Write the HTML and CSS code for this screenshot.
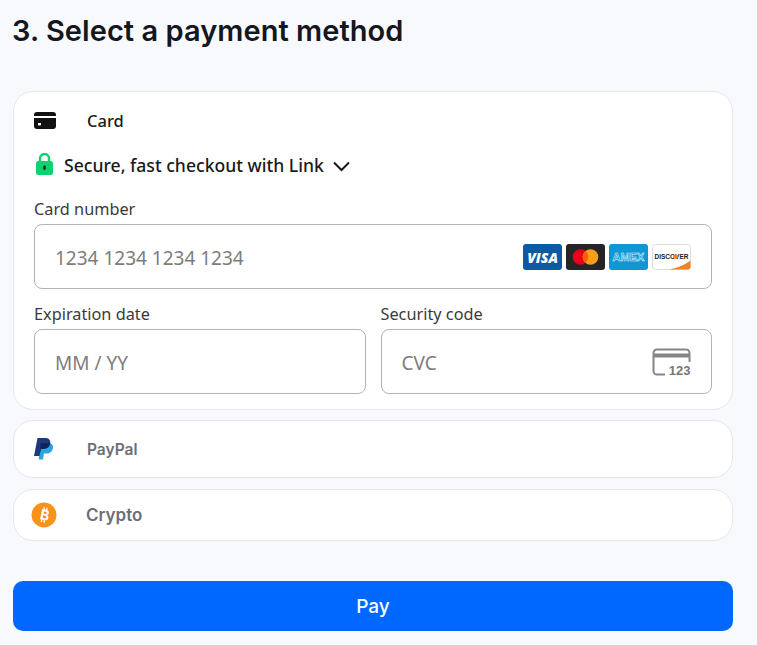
FILE: index.html
```html
<!DOCTYPE html>
<html lang="en">
<head>
    <meta charset="UTF-8" />
    <meta name="viewport" content="width=device-width, initial-scale=1.0" />
    <title>Checkout</title>
    <link rel="stylesheet" href="styles.css">
</head>
<body>
    <h2 class="title">3. Select a payment method</h2>

    <!-- CARD -->
    <div class="method method-open">
        <div class="method-head">
            <span class="method-icon">
                <svg width="22" height="17" viewBox="0 0 22 17">
                    <path d="M3 0h16a3 3 0 0 1 3 3v1H0V3a3 3 0 0 1 3-3z" fill="#111"/>
                    <path d="M0 6h22v8a3 3 0 0 1-3 3H3a3 3 0 0 1-3-3z" fill="#111"/>
                    <rect x="4" y="11" width="3" height="2.4" fill="#fff"/>
                </svg>
            </span>
            <span class="method-name method-name-card">Card</span>
        </div>
        <div class="link-row">
            <svg class="lock" width="17" height="22" viewBox="0 0 17 22">
                <path d="M4 9V5.500a4.500 4.500 0 0 1 9 0V9" fill="none" stroke="#10d16e" stroke-width="2.4"/>
                <rect x="0" y="8" width="17" height="14" rx="2.5" fill="#10d16e"/>
                <rect x="7.2" y="12.500" width="2.6" height="4.600" rx="1.300" fill="#0b3d24"/>
            </svg>
            <span class="link-text">Secure, fast checkout with Link</span>
            <svg class="chev" width="17" height="11" viewBox="0 0 17 11">
                <path d="M1 1.500l7.500 7.500 7.500-7.500" fill="none" stroke="#1a1a1a" stroke-width="2"/>
            </svg>
        </div>

        <label class="field-label">Card number</label>
        <div class="input">
            <span class="placeholder">1234 1234 1234 1234</span>
            <div class="brands">
                <svg width="39" height="26" viewBox="0 0 39 26">
                    <rect width="39" height="26" rx="3" fill="#0b5aa3"/>
                    <text x="19.500" y="18.500" text-anchor="middle" class="logo-visa">VISA</text>
                </svg>
                <svg width="39" height="26" viewBox="0 0 39 26">
                    <rect width="39" height="26" rx="3" fill="#252525"/>
                    <circle cx="14.500" cy="13" r="7.800" fill="#eb001b"/>
                    <circle cx="24.500" cy="13" r="7.800" fill="#f79e1b"/>
                    <path d="M19.500 7a7.800 7.800 0 0 1 0 12 7.800 7.800 0 0 1 0-12z" fill="#ff5f00"/>
                </svg>
                <svg width="39" height="26" viewBox="0 0 39 26">
                    <rect width="39" height="26" rx="3" fill="#0f97d4"/>
                    <text x="19.500" y="17" text-anchor="middle" class="logo-amex">AMEX</text>
                </svg>
                <svg width="39" height="26" viewBox="0 0 39 26">
                    <rect x="0.5" y="0.5" width="38" height="25" rx="3" fill="#fff" stroke="#dcdcdc"/>
                    <path d="M17 25.500c9-1.500 16-5 21.500-9V22.500a3 3 0 0 1-3 3z" fill="#f48120"/>
                    <text x="19.500" y="15" text-anchor="middle" class="logo-discover">DISCOVER</text>
                    <circle cx="23.700" cy="12.700" r="2.300" fill="#f48120"/>
                </svg>
            </div>
        </div>

        <div class="field-row">
            <div class="field">
                <label class="field-label">Expiration date</label>
                <div class="input">
                    <span class="placeholder">MM / YY</span>
                </div>
            </div>
            <div class="field">
                <label class="field-label">Security code</label>
                <div class="input">
                    <span class="placeholder">CVC</span>
                    <svg class="cvc" width="40" height="29" viewBox="0 0 40 29">
                        <path d="M13 26.500H5A3.500 3.500 0 0 1 1.500 23V5A3.500 3.500 0 0 1 5 1.500h29A3.500 3.500 0 0 1 37.500 5v9" fill="none" stroke="#868686" stroke-width="2"/>
                        <rect x="1" y="5.500" width="37" height="4" fill="#868686"/>
                        <text x="38.500" y="27" text-anchor="end" class="cvc-digits">123</text>
                    </svg>
                </div>
            </div>
        </div>
    </div>

    <!-- PAYPAL -->
    <div class="method method-paypal">
        <span class="method-icon">
            <svg width="20" height="22" viewBox="0 0 20 22">
                <path d="M6.500 5H14c3.500 0 5.500 1.800 5 5-.6 3.500-3 5.500-6.500 5.500H10L9 21.500H4.700z" fill="#2aa7e0"/>
                <path d="M3.500 0H11c3.800 0 5.800 2 5.200 5.300-.6 3.600-3.200 5.700-7 5.700H6.800L5.500 18H0z" fill="#1b3a7d"/>
                <path d="M6.500 5.200h9.700c-.1 .1 0 0 0 .1-.6 3.600-3.200 5.700-7 5.700H6.800L5.800 16.500z" fill="#12235a"/>
            </svg>
        </span>
        <span class="method-name method-name-off">PayPal</span>
    </div>

    <!-- CRYPTO -->
    <div class="method method-crypto">
        <span class="method-icon">
            <svg width="26" height="26" viewBox="0 0 26 26">
                <circle cx="13" cy="13" r="12.500" fill="#f7931a"/>
                <path d="M10 7.500h4.200c2 0 3.200 1 3.200 2.600 0 1.100-.6 2-1.600 2.300 1.300 .3 2.100 1.300 2.100 2.600 0 1.900-1.400 3-3.500 3H10zm2.300 2v2.200h1.500c.9 0 1.400-.4 1.400-1.100s-.5-1.100-1.400-1.100zm0 4v2.500h1.900c1 0 1.600-.5 1.600-1.250s-.6-1.250-1.600-1.250z" fill="#fff" transform="rotate(12 13 13)"/>
                <path d="M11.800 5.500v2.500M14.500 5.500v2.500M11.800 18v2.500M14.500 18v2.500" stroke="#fff" stroke-width="1.300" transform="rotate(12 13 13)"/>
            </svg>
        </span>
        <span class="method-name method-name-off">Crypto</span>
    </div>

    <button class="pay">Pay</button>
</body>
</html>
```

FILE: styles.css
```css
body {
    font-family: 'Noto Sans', sans-serif;
    background-color: #F8F9FC;
    margin: 0;
    padding: 0 24px 14px 13px;
    color: #1a1a1a;
}
.title {
    margin: 0 0 0 -1px;
    padding-top: 12px;
    font-family: 'Inter', sans-serif;
    font-size: 29px;
    line-height: 38px;
    font-weight: 600;
    letter-spacing: 0.05px;
    color: #14171f;
}

/* Payment method boxes */
.method {
    box-sizing: border-box;
    background-color: #fff;
    border: 1px solid #E6E7EC;
    border-radius: 20px;
}
.method-open {
    margin-top: 41px;
    height: 319px;
    padding: 0 20px;
}
.method-paypal,
.method-crypto {
    display: flex;
    align-items: center;
    padding-left: 16px;
}
.method-paypal {
    margin-top: 10px;
    height: 58px;
}
.method-crypto {
    margin-top: 11px;
    height: 52px;
}
.method-head {
    display: flex;
    align-items: center;
    height: 56px;
}
.method-head .method-icon {
    width: 53px;
    margin-right: 0;
    justify-content: flex-start;
}
.method-icon {
    display: flex;
    align-items: center;
    justify-content: center;
    width: 28px;
    margin-right: 28px;
}
.method-name {
    font-size: 16px;
    font-weight: 500;
    color: #1a1a1a;
}
.method-name-card {
    font-size: 16.5px;
}
.method-name-off {
    font-family: 'Inter', sans-serif;
    font-size: 15.5px;
    font-weight: 600;
    color: #6b6e78;
    margin-left: 1px;
}
.method-crypto .method-name-off {
    font-size: 17px;
    margin-left: 0;
}

/* Link row */
.link-row {
    display: flex;
    align-items: center;
    height: 34px;
    margin-bottom: 16px;
    padding-left: 2px;
}
.lock {
    margin-right: 11px;
    margin-top: -2px;
}
.link-text {
    font-size: 17.6px;
    font-weight: 500;
    color: #1a1a1a;
}
.chev {
    margin-left: 9px;
    margin-top: 3px;
}

/* Fields */
.field-label {
    display: block;
    font-size: 16.300px;
    line-height: 22px;
    height: 22px;
    margin-bottom: 4px;
    color: #3a3a3a;
}
.input {
    box-sizing: border-box;
    display: flex;
    align-items: center;
    justify-content: space-between;
    height: 65px;
    padding: 0 20px;
    background-color: #fff;
    border: 1px solid #B4B4B8;
    border-radius: 8px;
}
.placeholder {
    font-size: 19px;
    padding-top: 2px;
    color: #7d7d7d;
}
.brands {
    display: flex;
    gap: 4px;
}
.field-row {
    display: flex;
    gap: 15px;
    margin-top: 14px;
}
.field {
    flex: 1;
}
.logo-visa {
    font: italic 800 14px 'Open Sans', sans-serif;
    fill: #fff;
}
.logo-amex {
    font: 700 11px 'Liberation Sans', sans-serif;
    fill: #0f97d4;
    stroke: #e4f5fc;
    stroke-width: 0.5px;
}
.logo-discover {
    font: 700 6.500px 'Liberation Sans', sans-serif;
    fill: #222;
}
.cvc-digits {
    font: 700 13px 'Liberation Sans', sans-serif;
    fill: #777;
}
.cvc {
    margin-right: -1px;
    margin-top: 2px;
}

/* Pay button */
.pay {
    display: block;
    width: 100%;
    height: 50px;
    margin-top: 40px;
    background-color: #0068FF;
    color: #fff;
    border: none;
    border-radius: 10px;
    font-family: 'Inter', sans-serif;
    font-size: 19px;
    font-weight: 500;
}
```
